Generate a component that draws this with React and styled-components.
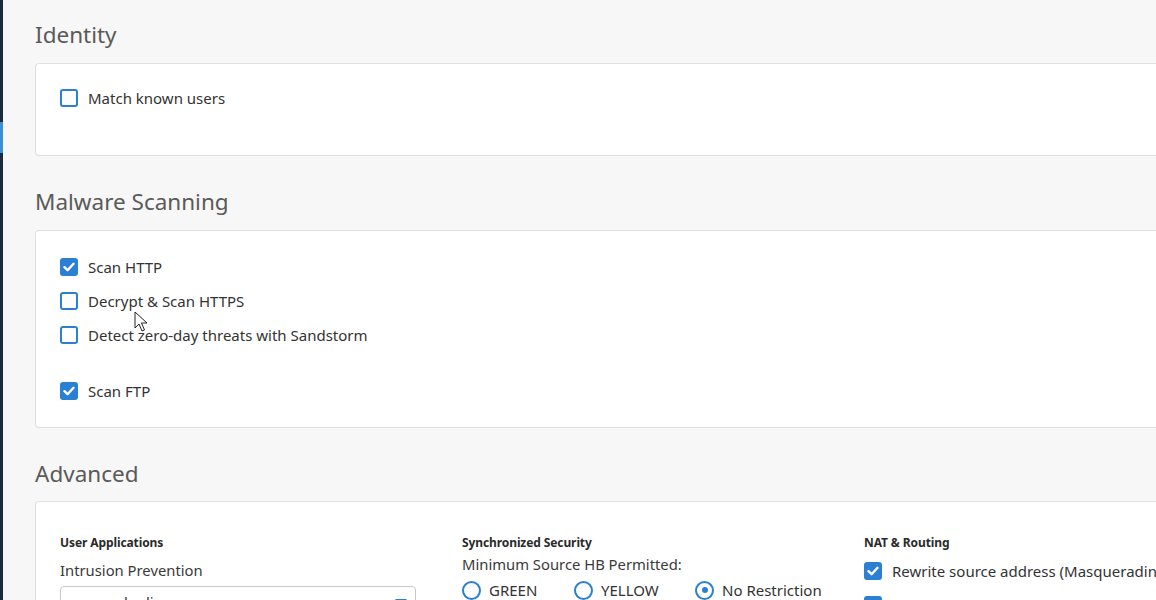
import React from 'react';
import styled, { createGlobalStyle } from 'styled-components';

const GlobalStyle = createGlobalStyle`
  html, body {
    margin: 0;
    padding: 0;
    overflow: hidden;
    background: #f7f7f7;
    font-family: "Noto Sans", "Open Sans", sans-serif;
    color: #333;
  }
`;

const Page = styled.div`
  display: flex;
  width: 1200px;
  height: 600px;
  overflow: hidden;
  position: relative;
`;

const Sidebar = styled.div`
  width: 3px;
  flex: none;
  background: #1d2a39;
  display: flex;
  flex-direction: column;
`;

const SidebarMark = styled.div`
  margin-top: 122px;
  height: 31px;
  background: #3b8fd7;
`;

const Main = styled.main`
  flex: 1;
  padding: 20px 0 0 32px;
  background: #f7f7f7;
`;

const SectionTitle = styled.h2`
  margin: ${(p) => (p.$first ? '0' : '31px')} 0 ${(p) => p.$mb || 13}px;
  font-size: 22.5px;
  line-height: 30px;
  font-weight: 400;
  color: #5a5a5a;
`;

const Card = styled.section`
  background: #fff;
  border: 1px solid #e0e0e0;
  border-right: none;
  border-radius: 4px 0 0 4px;
  padding: ${(p) => p.$pad || '19px 24px 19px'};
`;

const Row = styled.label`
  display: flex;
  align-items: center;
  gap: 10px;
  height: 34px;
  margin-top: ${(p) => p.$gap || 0}px;
  font-size: 15px;
  color: #333;
  white-space: nowrap;
`;

const Box = styled.span`
  width: 18px;
  height: 18px;
  box-sizing: border-box;
  flex: none;
  border-radius: 3px;
  border: 2px solid #2b80d3;
  background: ${(p) => (p.$checked ? '#2b80d3' : '#fff')};
  display: flex;
  align-items: center;
  justify-content: center;
`;

const Check = ({ checked }) => (
  <Box $checked={checked}>
    {checked && (
      <svg width="12" height="10" viewBox="0 0 12 10">
        <path d="M1.5 5.2 L4.6 8.2 L10.5 1.8" fill="none" stroke="#fff" strokeWidth="2.4" strokeLinecap="round" strokeLinejoin="round" />
      </svg>
    )}
  </Box>
);

const CheckRow = ({ checked, children, gap }) => (
  <Row $gap={gap}>
    <Check checked={checked} />
    {children}
  </Row>
);

const Columns = styled.div`
  display: grid;
  grid-template-columns: 356px 356px 356px;
  column-gap: 46px;
`;

const Column = styled.div`
  display: flex;
  flex-direction: column;
`;

const ColTitle = styled.div`
  font-size: 12px;
  line-height: 16px;
  font-weight: 700;
  letter-spacing: -0.1px;
  color: #2a2a2a;
  margin-bottom: ${(p) => p.$mb || 9}px;
`;

const FieldLabel = styled.div`
  font-size: 14.8px;
  line-height: 20px;
  color: #3a3a3a;
`;

const Select = styled.div`
  margin-top: 6px;
  height: 32px;
  box-sizing: border-box;
  border: 1px solid #c8c8c8;
  border-radius: 4px;
  display: flex;
  align-items: center;
  justify-content: space-between;
  padding: 0 8px 0 14px;
  font-size: 14.8px;
  color: #333;
`;

const Caret = styled.span`
  width: 0;
  height: 0;
  border-left: 6px solid transparent;
  border-right: 6px solid transparent;
  border-top: 7px solid #2b80d3;
`;

const RadioGroup = styled.div`
  display: flex;
  margin-top: 6px;
`;

const RadioItem = styled.label`
  display: flex;
  flex: none;
  align-items: center;
  gap: 8px;
  width: ${(p) => (p.$w ? `${p.$w}px` : 'auto')};
  font-size: 15px;
  color: #333;
  white-space: nowrap;
`;

const Ring = styled.span`
  width: 19px;
  height: 19px;
  flex: none;
  box-sizing: border-box;
  border-radius: 50%;
  border: 2.5px solid #2b80d3;
  display: flex;
  align-items: center;
  justify-content: center;
  &::after {
    content: '';
    display: ${(p) => (p.$on ? 'block' : 'none')};
    width: 6px;
    height: 6px;
    border-radius: 50%;
    background: #2b80d3;
  }
`;

const Radio = ({ on, w, children }) => (
  <RadioItem $w={w}>
    <Ring $on={on} />
    {children}
  </RadioItem>
);

const Cursor = styled.svg`
  position: absolute;
  left: 134px;
  top: 311px;
`;

export default function App() {
  return (
    <>
      <GlobalStyle />
      <Page>
        <Sidebar>
          <SidebarMark />
        </Sidebar>
        <Main>
          <SectionTitle $first>Identity</SectionTitle>
          <Card $pad="17px 24px 40px">
            <CheckRow>Match known users</CheckRow>
          </Card>

          <SectionTitle>Malware Scanning</SectionTitle>
          <Card>
            <CheckRow checked>Scan HTTP</CheckRow>
            <CheckRow>Decrypt &amp; Scan HTTPS</CheckRow>
            <CheckRow>Detect zero-day threats with Sandstorm</CheckRow>
            <CheckRow checked gap={22}>Scan FTP</CheckRow>
          </Card>

          <SectionTitle $mb={12}>Advanced</SectionTitle>
          <Card $pad="33px 24px 20px">
            <Columns>
              <Column>
                <ColTitle>User Applications</ColTitle>
                <FieldLabel>Intrusion Prevention</FieldLabel>
                <Select>
                  <span>generalpolicy</span>
                  <Caret />
                </Select>
              </Column>
              <Column>
                <ColTitle $mb={3}>Synchronized Security</ColTitle>
                <FieldLabel>Minimum Source HB Permitted:</FieldLabel>
                <RadioGroup>
                  <Radio w={112}>GREEN</Radio>
                  <Radio w={121}>YELLOW</Radio>
                  <Radio on>No Restriction</Radio>
                </RadioGroup>
              </Column>
              <Column>
                <ColTitle $mb={3}>NAT &amp; Routing</ColTitle>
                <CheckRow checked>Rewrite source address (Masquerading)</CheckRow>
                <CheckRow checked>Use gateway specified by firewall rule</CheckRow>
              </Column>
            </Columns>
          </Card>
        </Main>
        <Cursor width="14" height="22" viewBox="0 0 14 22">
          <path d="M1 1 L1 17 L5 13 L8 20 L10.5 19 L7.5 12 L13 12 Z" fill="#fff" stroke="#222" strokeWidth="1" strokeLinejoin="round" />
        </Cursor>
      </Page>
    </>
  );
}
